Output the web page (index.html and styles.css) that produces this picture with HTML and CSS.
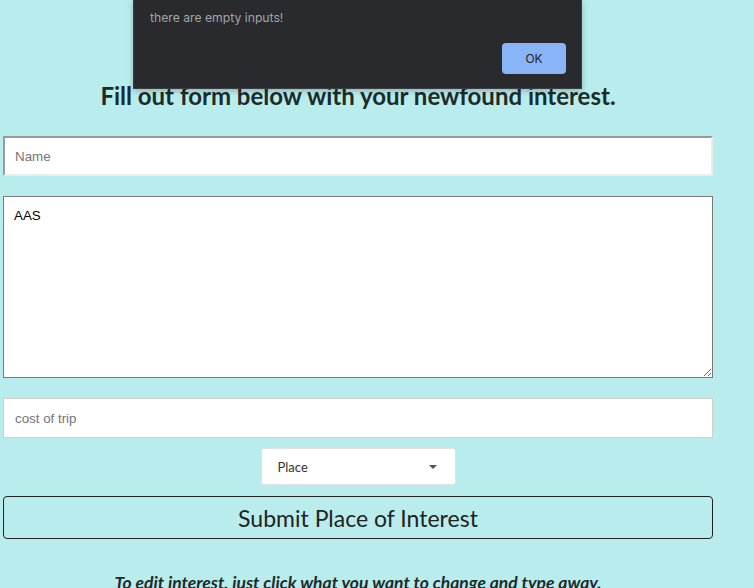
FILE: index.html
```html
<!DOCTYPE html>
<html lang="en">
<head>
<meta charset="utf-8">
<title>Places of Interest</title>
<link rel="stylesheet" href="styles.css">
</head>
<body>
<div class="dialog">
  <p class="dialog-msg">there are empty inputs!</p>
  <div class="dialog-actions"><button class="dialog-ok">OK</button></div>
</div>
<main class="page">
  <h1 class="title">Fill out form below with your newfound interest.</h1>
  <form class="form">
    <input class="field field-name" type="text" placeholder="Name">
    <textarea class="field field-area">AAS</textarea>
    <input class="field field-cost" type="text" placeholder="cost of trip">
    <div class="select">
      <span class="select-label">Place</span>
      <span class="select-caret"></span>
    </div>
    <button class="submit" type="button">Submit Place of Interest</button>
  </form>
  <p class="hint">To edit interest, just click what you want to change and type away.</p>
</main>
</body>
</html>
```

FILE: styles.css
```css
html, body {
  margin: 0;
  padding: 0;
}
body {
  background: #b9eded;
  font-family: Lato, "Open Sans", sans-serif;
  color: #1e2a2a;
  overflow: hidden;
  height: 588px;
}
.dialog {
  position: absolute;
  top: 0;
  left: 133px;
  width: 449px;
  height: 89px;
  box-sizing: border-box;
  background: #292a2d;
  border: 1px solid #3c3d40;
  border-top: none;
  box-shadow: 0 2px 6px rgba(0, 0, 0, 0.25);
  padding: 10px 15px 0 16px;
  z-index: 10;
}
.dialog-msg {
  margin: 0;
  font-family: Inter, "Liberation Sans", sans-serif;
  font-size: 12.2px;
  line-height: 16px;
  color: #a2a5a9;
}
.dialog-actions {
  display: flex;
  justify-content: flex-end;
  margin-top: 17px;
}
.dialog-ok {
  width: 64px;
  height: 31px;
  border: none;
  border-radius: 4px;
  background: #8ab4f8;
  color: #202124;
  font-family: Inter, "Liberation Sans", sans-serif;
  font-size: 12px;
  padding: 0;
}
.page {
  width: 710px;
  margin-left: 3px;
  padding-top: 82px;
}
.title {
  margin: 0;
  text-align: center;
  font-size: 24px;
  font-weight: 700;
  line-height: 28px;
  color: #1d2b2b;
}
.form {
  display: flex;
  flex-direction: column;
  align-items: stretch;
  margin-top: 26px;
}
.field {
  box-sizing: border-box;
  width: 710px;
  margin: 0;
  background: #fff;
  font-family: "Liberation Sans", Arial, sans-serif;
  font-size: 13.33px;
  color: #000;
  outline: none;
}
.field::placeholder {
  color: #757575;
}
.field-name {
  height: 40px;
  border-width: 2px;
  border-style: solid;
  border-color: #9a9a9a #ececec #ececec #9a9a9a;
  padding: 0 10px;
}
.field-area {
  height: 182px;
  margin-top: 20px;
  border: 1px solid #7a7a7a;
  padding: 11px 10px;
  resize: both;
  line-height: 15px;
}
.field-cost {
  height: 40px;
  margin-top: 20px;
  border: 1px solid #cfcfcf;
  padding: 0 11px;
}
.select {
  align-self: center;
  box-sizing: border-box;
  width: 195px;
  height: 37px;
  margin-top: 10px;
  background: #fff;
  border: 1px solid #e2e2e2;
  border-radius: 3px;
  display: flex;
  align-items: center;
  justify-content: space-between;
  padding: 0 18px 0 16px;
}
.select-label {
  font-size: 13px;
  color: #333;
}
.select-caret {
  width: 0;
  height: 0;
  border-left: 4px solid transparent;
  border-right: 4px solid transparent;
  border-top: 4px solid #555;
}
.submit {
  box-sizing: border-box;
  width: 710px;
  height: 43px;
  margin-top: 11px;
  background: transparent;
  border: 1px solid #222;
  border-radius: 4px;
  font-family: Lato, sans-serif;
  font-size: 23px;
  font-weight: 400;
  color: #222;
  padding: 0;
}
.hint {
  margin: 33px 0 0;
  text-align: center;
  font-size: 17.5px;
  font-weight: 700;
  font-style: italic;
  color: #1d2b2b;
}
```
